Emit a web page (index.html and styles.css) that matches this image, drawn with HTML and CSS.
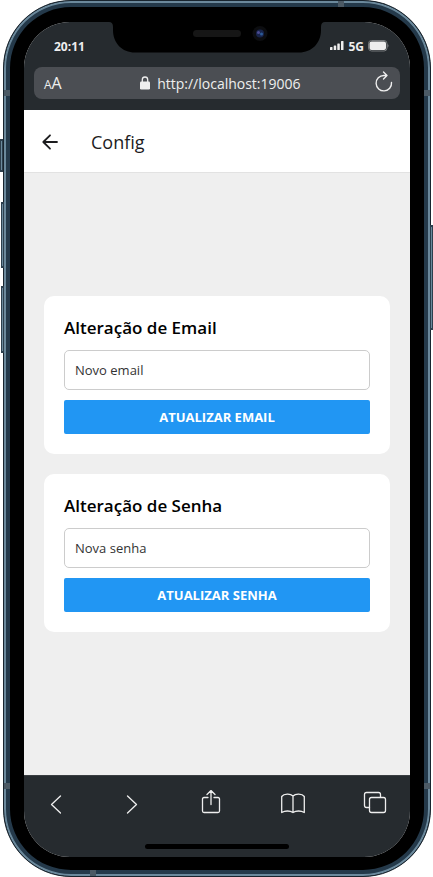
FILE: index.html
```html
<!DOCTYPE html>
<html lang="pt-BR">
<head>
<meta charset="utf-8">
<meta name="viewport" content="width=device-width, initial-scale=1">
<title>Config</title>
<link rel="stylesheet" href="styles.css">
</head>
<body>
<div class="phone">
  <span class="side-key key-mute"></span>
  <span class="side-key key-up"></span>
  <span class="side-key key-down"></span>
  <span class="side-key key-power"></span>
  <span class="band band-side band-left band-top"></span>
  <span class="band band-side band-right band-top"></span>
  <span class="band band-side band-left band-bottom"></span>
  <span class="band band-side band-right band-bottom"></span>
  <span class="band band-edge band-ceiling"></span>
  <span class="band band-edge band-floor"></span>
  <div class="screen">
    <svg class="notch" width="216" height="31" viewBox="0 0 216 31" aria-hidden="true">
      <path d="M0 0Q4 0 4 5V8C4 21 13 30.500 26 30.500H190C203 30.500 212 21 212 8V5Q212 0 216 0Z" fill="#000"/>
      <rect x="84" y="8" width="48" height="7" rx="3.500" fill="#161616"/>
      <circle cx="151" cy="11.500" r="7.500" fill="#0c0d10"/>
      <circle cx="151" cy="11.500" r="4" fill="#18244c"/>
      <circle cx="149.500" cy="10.500" r="1.500" fill="#4b4b92"/>
      <circle cx="152.500" cy="12" r="1.500" fill="#2c5b98"/>
    </svg>
    <header class="browser">
      <div class="status">
        <span>20:11</span>
        <span class="signal">
          <svg width="14" height="10" viewBox="0 0 14 10" aria-hidden="true" fill="#eee">
            <rect x="0" y="6" width="2.500" height="3" rx=".6"/><rect x="3.700" y="4.500" width="2.500" height="4.500" rx=".6"/><rect x="7.300" y="2.500" width="2.500" height="6.500" rx=".6"/><rect x="11" y="0" width="2.500" height="9" rx=".6"/>
          </svg>
          <span>5G</span>
          <svg width="21" height="12" viewBox="0 0 21 12" aria-hidden="true">
            <rect x=".5" y=".5" width="18.500" height="10.500" rx="3" fill="none" stroke="#75787b"/>
            <rect x="1.500" y="1.500" width="16.500" height="8.500" rx="2" fill="#eee"/>
            <path d="M19.500 4v3.500q1-.5 1-1.700T19.500 4z" fill="#85888b"/>
          </svg>
        </span>
      </div>
      <div class="address">
        <span class="text-size"><small>A</small>A</span>
        <span class="url">
          <svg width="10" height="14" viewBox="0 0 10 14" aria-hidden="true">
            <path d="M2.300 6V3.700a2.700 2.700 0 0 1 5.400 0V6" fill="none" stroke="#eee" stroke-width="1.300"/>
            <rect y="5.500" width="10" height="8" rx="1.300" fill="#eee"/>
          </svg>
          http://localhost:19006
        </span>
        <button class="icon-button reload" type="button" aria-label="Recarregar">
          <svg width="18" height="22" viewBox="0 0 18 22" fill="none" stroke="#eee" stroke-width="1.400" stroke-linecap="round" stroke-linejoin="round">
            <path d="M16.500 11.500A7.700 7.700 0 1 1 8.800 4.500H12M8.500 1L12 4.500L8.500 8"/>
          </svg>
        </button>
      </div>
    </header>
    <div class="app-bar">
      <button class="icon-button" type="button" aria-label="Voltar">
        <svg width="16" height="16" viewBox="0 0 16 16" fill="none" stroke="#1c1c1e" stroke-width="1.800" stroke-linecap="round" stroke-linejoin="round">
          <path d="M15 8H1.500M8 1.300L1.300 8L8 14.700"/>
        </svg>
      </button>
      <h1>Config</h1>
    </div>
    <main class="content">
      <form class="card">
        <h2><label for="email">Alteração de Email</label></h2>
        <input id="email" type="email" placeholder="Novo email">
        <button class="submit" type="button">ATUALIZAR EMAIL</button>
      </form>
      <form class="card">
        <h2><label for="senha">Alteração de Senha</label></h2>
        <input id="senha" type="password" placeholder="Nova senha">
        <button class="submit" type="button">ATUALIZAR SENHA</button>
      </form>
    </main>
    <footer class="toolbar">
      <nav class="tools" aria-label="Navegador">
        <button class="icon-button" type="button" aria-label="Anterior">
          <svg width="18" height="26" viewBox="0 0 18 26"><path d="M13.500 6L4.500 14.500L13.500 23"/></svg>
        </button>
        <button class="icon-button" type="button" aria-label="Próxima">
          <svg width="18" height="26" viewBox="0 0 18 26"><path d="M4.500 6L13.500 14.500L4.500 23"/></svg>
        </button>
        <button class="icon-button" type="button" aria-label="Compartilhar">
          <svg width="24" height="26" viewBox="0 0 24 26"><path d="M9 7.500H5Q3.500 7.500 3.500 9V21Q3.500 22.500 5 22.500H19Q20.500 22.500 20.500 21V9Q20.500 7.500 19 7.500H15M12 14.500V.8M8 4.500L12 .5L16 4.500"/></svg>
        </button>
        <button class="icon-button" type="button" aria-label="Favoritos">
          <svg width="24" height="26" viewBox="0 0 24 26"><path d="M12 22.500V6C9.500 3.500 3 3.500 .7 6.500V22.500C4 20.500 9 20.500 12 22.500C15 20.500 20 20.500 23.300 22.500V6.500C21 3.500 14.500 3.500 12 6"/></svg>
        </button>
        <button class="icon-button" type="button" aria-label="Abas">
          <svg width="24" height="26" viewBox="0 0 24 26"><rect x="6.500" y="7.500" width="16" height="15" rx="2"/><path d="M6.500 17.500H3.500Q1.500 17.500 1.500 15.500V4.500Q1.500 2.500 3.500 2.500H15.500Q17.500 2.500 17.500 4.500V7"/></svg>
        </button>
      </nav>
      <span class="home"></span>
    </footer>
  </div>
</div>
</body>
</html>
```
FILE: styles.css
```css
* { box-sizing: border-box; }

body {
  margin: 0;
  background: #fff;
  font-family: "Open Sans", "Noto Sans", sans-serif;
}

.phone {
  position: relative;
  display: flex;
  min-height: 100vh;
  margin: 0 2px 0 3px;
  padding: 21px 20px 19px;
  border: 1px solid #18242e;
  border-radius: 68px;
  background: #000;
  box-shadow: inset 0 0 0 2px #6b899c, inset 0 0 0 6px #24394a;
}

.side-key {
  position: absolute;
  width: 3px;
  border: 1px solid #2c3f4d;
  border-width: 2px 1px;
  background: #6b899c;
}

.key-mute { top: 138px; left: -4px; height: 33px; }
.key-up { top: 201px; left: -3px; height: 66px; }
.key-down { top: 285px; left: -3px; height: 67px; }
.key-power { top: 224px; right: -3px; height: 105px; }

.band { position: absolute; background: #4c5a65; }
.band-side { width: 6px; height: 6px; }
.band-edge { width: 6px; height: 6px; }
.band-left { left: 0; }
.band-right { right: 0; }
.band-top { top: 89px; }
.band-bottom { bottom: 87px; }
.band-ceiling { top: 0; right: 86px; }
.band-floor { bottom: 0; left: 86px; }

.screen {
  position: relative;
  display: flex;
  flex: 1;
  flex-direction: column;
  overflow: hidden;
  border-radius: 46px;
  background: #efefef;
}

.notch {
  position: absolute;
  top: 0;
  left: 50%;
  transform: translateX(-50%);
}

.browser {
  padding: 12px 10px 11px;
  background: #262b2f;
  color: #eee;
}

.status {
  display: flex;
  align-items: center;
  justify-content: space-between;
  height: 24px;
  padding: 0 11px 0 20px;
  font-size: 12px;
  font-weight: 700;
}

.signal { display: flex; align-items: center; gap: 4px; }

.address {
  display: flex;
  align-items: center;
  justify-content: space-between;
  height: 32px;
  margin-top: 9px;
  padding: 0 7px 0 10px;
  border-radius: 8px;
  background: #4b4e53;
}

.text-size { font-size: 16px; }
.text-size small { font-size: 12px; }

.url {
  display: flex;
  align-items: center;
  gap: 7px;
  padding-left: 4px;
  font-size: 14px;
}

.icon-button {
  display: flex;
  padding: 0;
  border: 0;
  background: none;
}

.reload { align-self: flex-start; padding-top: 4px; }

.app-bar {
  display: flex;
  align-items: center;
  gap: 33px;
  height: 63px;
  padding: 2px 18px 0;
  border-bottom: 1px solid #e2e2e2;
  background: #fff;
}

h1 {
  margin: 0;
  color: #1c1c1e;
  font-size: 18px;
  font-weight: 500;
}

.content {
  display: flex;
  flex: 1;
  flex-direction: column;
  justify-content: center;
  padding: 0 20px;
}

.card {
  display: flex;
  flex-direction: column;
  gap: 10px;
  margin-bottom: 20px;
  padding: 20px;
  border-radius: 10px;
  background: #fff;
}

h2 {
  margin: 0;
  color: #000;
  font-size: 17px;
  font-weight: 600;
  line-height: 24px;
}

.card input {
  width: 100%;
  height: 40px;
  padding: 0 10px;
  border: 1px solid #ccc;
  border-radius: 5px;
  font: 13px "Open Sans", "Noto Sans", sans-serif;
}

.card input::placeholder { color: #333; opacity: 1; }

.submit {
  height: 34px;
  padding: 0;
  border: 0;
  border-radius: 2px;
  background: #2196f3;
  color: #fff;
  font: 700 13px "Open Sans", "Noto Sans", sans-serif;
}

.toolbar {
  display: flex;
  flex-direction: column;
  align-items: center;
  justify-content: space-between;
  height: 82px;
  padding: 14px 23px 8px;
  border-top: 1px solid #3a3e42;
  background: #262b2f;
}

.tools { display: flex; justify-content: space-between; width: 100%; }

.tools svg {
  fill: none;
  stroke: #eee;
  stroke-width: 1.3;
  stroke-linecap: round;
  stroke-linejoin: round;
}

.home { width: 144px; height: 5px; border-radius: 3px; background: #000; }
```
